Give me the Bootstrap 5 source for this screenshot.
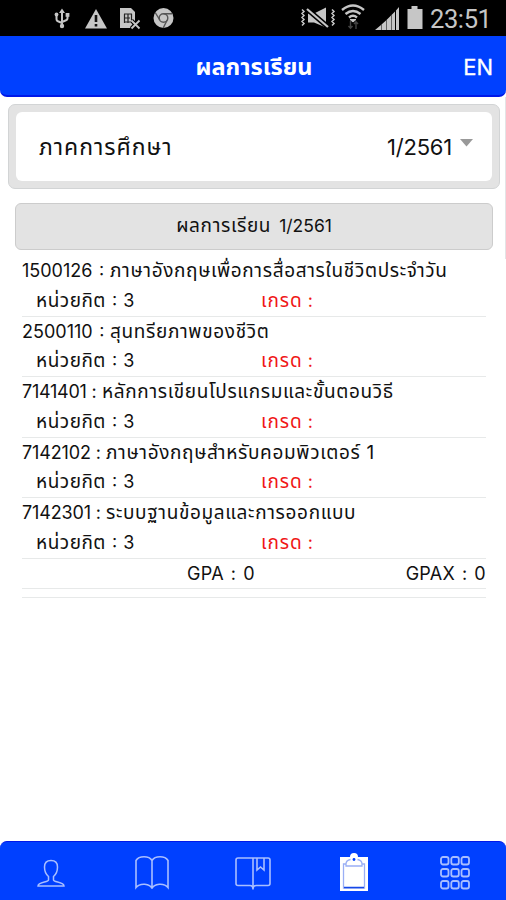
<!DOCTYPE html>
<html lang="th">
<head>
<meta charset="utf-8">
<meta name="viewport" content="width=device-width, initial-scale=1">
<title>ผลการเรียน</title>
<link rel="stylesheet" href="https://cdn.jsdelivr.net/npm/bootstrap@5.3.0/dist/css/bootstrap.min.css">
<style>
body{font-family:Inter,"Noto Sans Thai","Noto Sans",sans-serif;color:#111;height:900px;overflow:hidden}
svg{display:block;flex:none;overflow:visible}
.status{height:36px;background:#000;color:#c6c6c6}
.clock{font:25.5px/38px Roboto,sans-serif;letter-spacing:-.4px}
.topbar{height:61px;background:#0040ff;border-bottom:2px solid #0018e8;border-radius:0 0 7px 7px}
.topbar h1{font-size:23.5px;padding:3px 0 0 2px}
.lang{font-size:22px;right:13px;top:14px;line-height:34px;-webkit-text-stroke:.3px #fff}
.content{border-right:1px solid transparent;border-image:linear-gradient(#e3e4e6 163px,transparent 163px) 1}
.picker{margin:7px 5px 0 8px;padding:7px;background:#e3e3e3;border:1px solid #d2d4d5;border-radius:7px;height:85px}
.picker-in{height:69px;border-radius:6px;padding:0 19px 0 23px;font-size:22px}
.picker-label{font-size:23px;letter-spacing:.95px;padding-top:2px}
.picker-value{letter-spacing:-.2px;padding-top:2px}
.band{margin:14px 12px 0 15px;height:47px;background:#e3e3e3;border:1px solid #ccc;border-radius:6px;font-size:17.5px}
.th{font-size:19px;letter-spacing:.65px}
.list{margin:6px 19px 0 22px;font-size:18px}
.course{height:60.5px;border-bottom:1.5px solid #e7e9e9}
.line{height:29.5px;line-height:29.5px;white-space:nowrap}
.code-a{width:88px;word-spacing:1.5px}
.code-b{width:80px;letter-spacing:-.25px}
.code-c{width:84px;letter-spacing:-.15px}
.unit{width:239px;padding-left:14px;word-spacing:1px}
.unit .th{letter-spacing:.5px}
.grade{color:#f01616}
.grade .th{letter-spacing:.9px}
.total{height:30px;line-height:29px;border-bottom:1.5px solid #e7e9e9;letter-spacing:.3px;word-spacing:1.5px}
.gpa{padding-left:165px}
.endline{height:9px;border-bottom:1.5px solid #e7e9e9}
.tabs{height:59px;background:#0040ff;border-top:1px solid #0018e8;border-radius:7px 7px 0 0;color:#a9beff;padding-top:4px}
.tabs svg{margin:auto}
</style>
<script src="https://cdn.jsdelivr.net/npm/bootstrap@5.3.0/dist/js/bootstrap.bundle.min.js"></script>
</head>
<body class="d-flex flex-column bg-white">
<div class="status">
<div class="d-flex h-100">
<svg width="430" height="36" viewBox="0 0 430 36" fill="none" stroke="currentColor">
<g stroke-width="2"><path d="M62 27V11M56.500 14v5q0 2 2 2.500l3.500 1.500M67.500 14v4q0 2-2 2.500l-3.500 1.500"/><path d="M59 13 62 8.500l3 4.500z" fill="currentColor" stroke="none"/><circle cx="62" cy="26" r="2.200" fill="currentColor" stroke="none"/><circle cx="56.500" cy="14.500" r="1.900" fill="currentColor" stroke="none"/><path d="M65.600 13h3.800v3.800h-3.800z" fill="currentColor" stroke="none"/></g>
<path d="M96 9 107 28.500H85z" fill="currentColor" stroke="none"/><path d="M96 15v7M96 24v2.500" stroke="#111" stroke-width="2.600"/>
<path d="M120 8h11l4 4v9l-5 7h-10z" fill="currentColor" stroke="none"/><path d="M124 14h8M124 18h6M124 22h6M124.500 14v9M128 14v9M131.500 14v6" stroke="#222" stroke-width="1.200"/><path d="m131.500 20.500 8 8m0-8-8 8" stroke="#000" stroke-width="4"/><path d="m131.500 20.500 8 8m0-8-8 8" stroke-width="1.800"/>
<circle cx="163.500" cy="18" r="10" fill="currentColor" stroke="none"/><circle cx="163.500" cy="18" r="4.300" stroke="#555" stroke-width="1.400"/><path d="M163.500 13.700h8.500M159.800 20l-4.600-7.500M167.200 20l-4 8" stroke="#555" stroke-width="1.400"/>
<g stroke-width="1.500"><path d="m302 9.500 2 2-2 2 2 2-2 2 2 2-2 2 2 2-2 2M332 9.500l2 2-2 2 2 2-2 2 2 2-2 2 2 2-2 2"/><path d="M308 13.500h6l12-6v20l-12-5h-6z" fill="currentColor" stroke="none"/><path d="m307 9 21 18" stroke="#000" stroke-width="5"/><path d="m307 9 21 18" stroke-width="2.200"/></g>
<g stroke-width="2.400"><path d="M342 10q11-9 22 0M345.500 14q7.500-6 15 0M349 17.500q4-3.300 8 0"/></g><path d="m350 19.500 3 2.500 3-2.500z" fill="currentColor"/><path d="M350.500 21v7m-2-2 2 2.300 2-2.300M356 29v-7m-2 2 2-2.300 2 2.300" stroke="#444" stroke-width="1.400"/>
<g fill="currentColor" stroke="none"><path d="M375 30 381 25v5zM381.500 24.500l4.500-4V30h-4.500zM386.500 20l4.500-4.500V30h-4.500zM391.500 15l3.500-3.500V30h-3.500zM396 10.500l3-3.500V30h-3z"/><path d="M407.500 9h4V6h6v3h5v20h-15z"/></g>
</svg>
<span class="clock ms-auto me-3">23:51</span>
</div>
</div>
<header class="topbar position-relative text-white text-center d-flex align-items-center justify-content-center"><h1 class="m-0 fw-bold">ผลการเรียน</h1><span class="lang position-absolute">EN</span></header>
<main class="content flex-fill">
<section class="picker"><div class="picker-in bg-white d-flex align-items-center"><span class="picker-label">ภาคการศึกษา</span><span class="picker-value ms-auto">1/2561</span><svg class="ms-2 mb-2" width="13" height="8" viewBox="0 0 13 8"><path d="M0 0h13L6.500 7.500z" fill="#999"/></svg></div></section>
<div class="band d-flex align-items-center justify-content-center"><span class="th">ผลการเรียน</span><span class="ms-2">1/2561</span></div>
<div class="list">
<div class="course"><div class="line d-flex"><span class="code-a">1500126 :</span><span class="th">ภาษาอังกฤษเพื่อการสื่อสารในชีวิตประจำวัน</span></div><div class="line d-flex"><span class="unit"><span class="th">หน่วยกิต</span> : 3</span><span class="grade"><span class="th">เกรด</span> :</span></div></div>
<div class="course"><div class="line d-flex"><span class="code-a">2500110 :</span><span class="th">สุนทรียภาพของชีวิต</span></div><div class="line d-flex"><span class="unit"><span class="th">หน่วยกิต</span> : 3</span><span class="grade"><span class="th">เกรด</span> :</span></div></div>
<div class="course"><div class="line d-flex"><span class="code-b">7141401 :</span><span class="th">หลักการเขียนโปรแกรมและขั้นตอนวิธี</span></div><div class="line d-flex"><span class="unit"><span class="th">หน่วยกิต</span> : 3</span><span class="grade"><span class="th">เกรด</span> :</span></div></div>
<div class="course"><div class="line d-flex"><span class="code-c">7142102 :</span><span class="th">ภาษาอังกฤษสำหรับคอมพิวเตอร์ 1</span></div><div class="line d-flex"><span class="unit"><span class="th">หน่วยกิต</span> : 3</span><span class="grade"><span class="th">เกรด</span> :</span></div></div>
<div class="course"><div class="line d-flex"><span class="code-c">7142301 :</span><span class="th">ระบบฐานข้อมูลและการออกแบบ</span></div><div class="line d-flex"><span class="unit"><span class="th">หน่วยกิต</span> : 3</span><span class="grade"><span class="th">เกรด</span> :</span></div></div>
<div class="total d-flex justify-content-between"><span class="gpa">GPA : 0</span><span>GPAX : 0</span></div>
<div class="endline"></div>
</div>
</main>
<nav class="tabs row row-cols-5 g-0 align-items-center">
<div class="col"><svg width="28" height="28" viewBox="0 0 28 28" fill="none" stroke="currentColor" stroke-width="1.500"><path d="M11.500 17.500C8.500 15 7.500 12 7.500 8c0-4 2.500-6.500 6.500-6.500s6.500 2.500 6.500 6.500c0 4-1 7-4 9.500v3.500c0 2.500 10.500 1.500 10.500 6h-26c0-4.500 10.500-3.500 10.500-6z"/></svg></div>
<div class="col"><svg width="34" height="34" viewBox="0 0 34 34" fill="none" stroke="currentColor" stroke-width="1.600"><path d="M17 32.500c-2-5-12-6-16-1V4.500c3-5 13-5 16 0 3-5 13-5 16 0v27c-4-5-14-4-16 1V4.500"/></svg></div>
<div class="col"><svg width="36" height="34" viewBox="0 0 36 34" fill="none" stroke="currentColor" stroke-width="1.600"><path d="M18 2v31.500c0-3-1-4-3-4H3q-2 0-2-2V4q0-2 2-2h30q2 0 2 2v23.500q0 2-2 2H21c-2 0-3 1-3 4M22 2v12l3.500-3 3.500 3V2"/></svg></div>
<div class="col"><svg width="28" height="36" viewBox="0 0 28 36"><path d="M0 2h10a4 4 0 0 1 8 0h10v34H0z" fill="#fff"/><path d="M6 9H3.500v24h21V9H22M6 9c0-3 2-4 4.500-4.500M22 9c0-3-2-4-4.500-4.500M6 9v2h16V9" fill="none" stroke="#9aaff5" stroke-width="1.300"/><path d="M4 32.500h20" stroke="#1648e8" stroke-width="1.500"/><circle cx="14" cy="4.500" r="1.400" fill="#0040ff"/></svg></div>
<div class="col"><svg width="30" height="34" viewBox="0 0 30 34" fill="none" stroke="currentColor" stroke-width="1.800"><g id="dots"><rect x="1" y="1" width="7.500" height="7.500" rx="2"/><rect x="11.300" y="1" width="7.500" height="7.500" rx="2"/><rect x="21.500" y="1" width="7.500" height="7.500" rx="2"/></g><use href="#dots" y="12"/><use href="#dots" y="24"/></svg></div>
</nav>
</body>
</html>
